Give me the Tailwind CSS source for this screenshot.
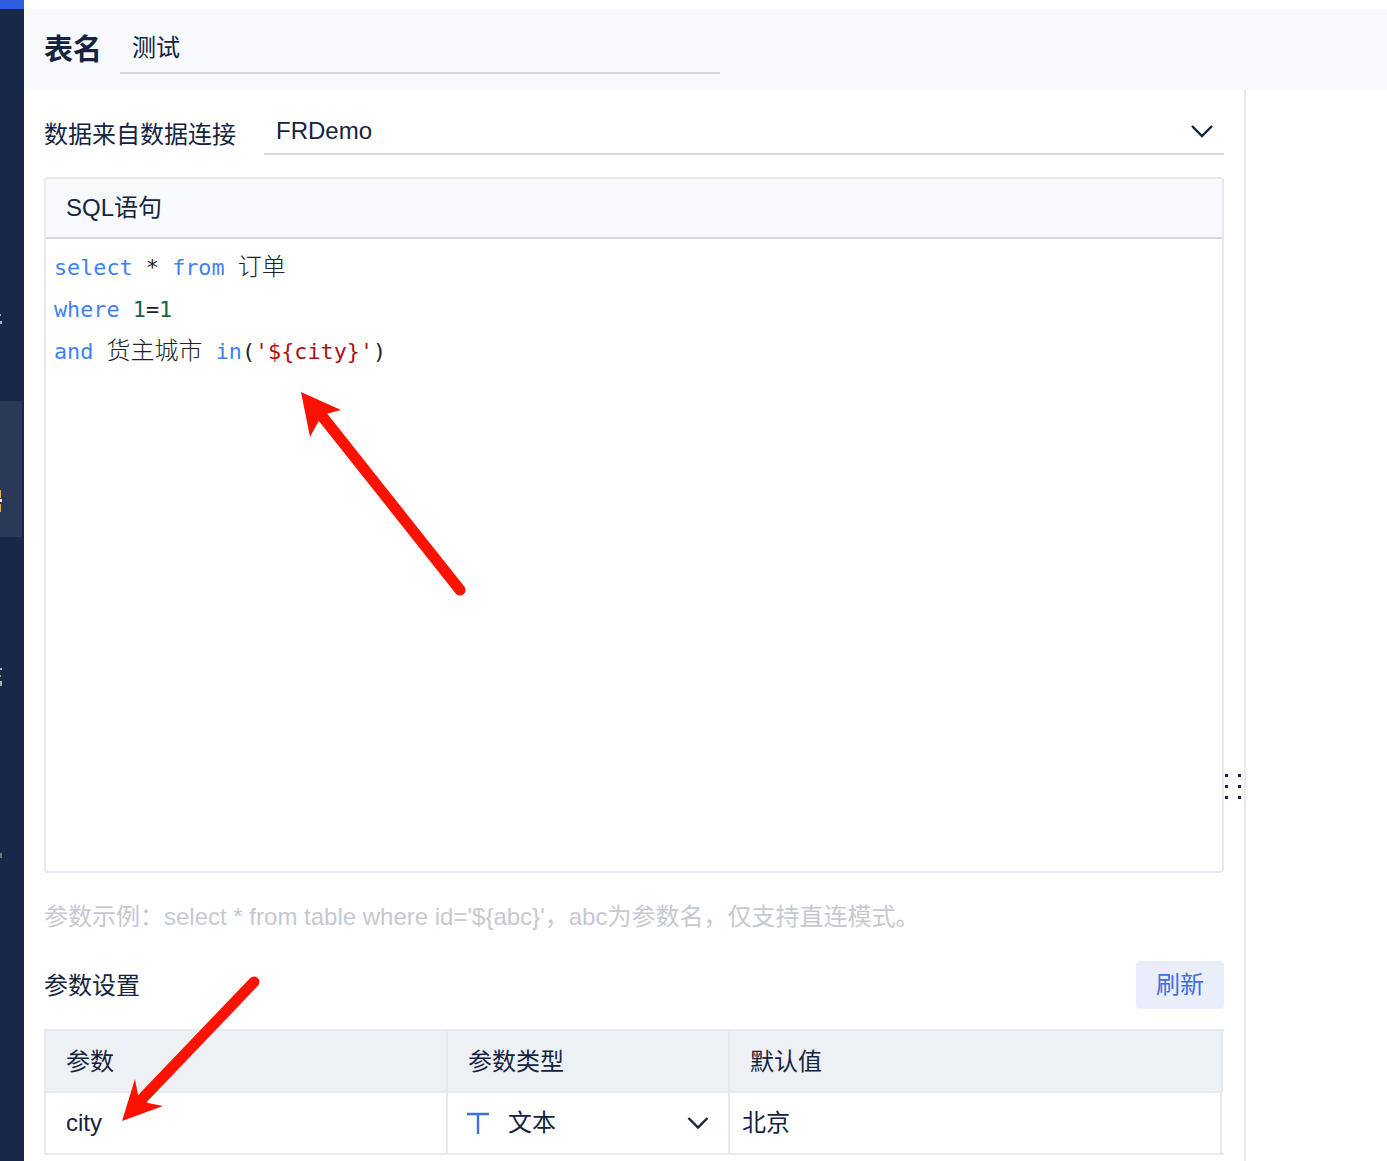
<!DOCTYPE html>
<html lang="zh-CN">
<head>
    <meta charset="UTF-8">
    <title>表名</title>
    <script src="https://cdn.jsdelivr.net/npm/@tailwindcss/browser@4"></script>
</head>
<body class="relative h-[1161px] w-[1387px] overflow-hidden bg-white font-['Liberation_Sans','Noto_Sans_CJK_SC',sans-serif] text-[24px] text-[#14233f]">
    <div class="flex h-full">
        <!-- cropped sidebar -->
        <aside class="relative h-full w-[24px] shrink-0 bg-[#172849]">
            <div class="h-[9px] bg-[#2f5fe0]"></div>
            <div class="absolute left-0 top-[401px] h-[136px] w-[22px] bg-[#2a3957]"></div>
            <div class="absolute left-0 top-[314px] h-[2px] w-[1px] bg-[#b9a58f]"></div>
            <div class="absolute left-0 top-[321px] h-[3px] w-[2px] bg-[#a9afbb]"></div>
            <div class="absolute left-0 top-[490px] h-[8px] w-[1px] bg-[#e8b040]"></div>
            <div class="absolute left-0 top-[499px] h-[3px] w-[2px] bg-[#e8e8e8]"></div>
            <div class="absolute left-0 top-[504px] h-[8px] w-[1px] bg-[#e8b040]"></div>
            <div class="absolute left-0 top-[668px] h-[2px] w-[2px] bg-[#a9afbb]"></div>
            <div class="absolute left-0 top-[675px] h-[2px] w-[1px] bg-[#b9a58f]"></div>
            <div class="absolute left-0 top-[681px] h-[5px] w-[2px] bg-[#a9afbb]"></div>
            <div class="absolute left-0 top-[853px] h-[5px] w-[2px] bg-[#6f7485]"></div>
        </aside>

        <main class="flex min-w-0 flex-1 flex-col">
            <header class="mt-[9px] flex h-[80px] shrink-0 items-center bg-[#f7f9fc] pl-[20px]">
                <span class="w-[76px] pt-[2px] text-[29px] font-bold leading-none">表名</span>
                <div class="mt-[1px] flex h-[48px] w-[600px] items-center border-b-2 border-[#d4d8e0] pl-[12px] pb-[2px]">测试</div>
            </header>

            <div class="flex min-h-0 w-[1222px] flex-1 flex-col border-r-2 border-[#e6e9f0] px-[20px]">
                <div class="mt-[18px] flex h-[48px] items-center">
                    <label class="w-[220px] pt-[8px]">数据来自数据连接</label>
                    <div class="flex h-full flex-1 items-center justify-between border-b-2 border-[#d4d8e0] pl-[12px] pr-[10px] pt-[2px]">
                        <span>FRDemo</span>
                        <svg width="24" height="16" viewBox="0 0 24 16" fill="none" stroke="#14233f" stroke-width="2.4"><path d="M2 3l10 10L22 3"/></svg>
                    </div>
                </div>

                <section class="mt-[22px] flex h-[696px] flex-col rounded-[4px] border-2 border-[#e6e9f0]">
                    <div class="flex h-[60px] shrink-0 items-center border-b-2 border-[#d4d8e0] bg-[#f7f9fc] pl-[20px]">SQL语句</div>
                    <pre class="pl-[8px] pt-[8px] font-['DejaVu_Sans_Mono','Noto_Sans_CJK_SC',monospace] text-[21.8px] leading-[42px] text-[#222]"><span class="text-[#3f82ef]">select</span> * <span class="text-[#3f82ef]">from</span> <span class="text-[24px] font-light leading-none">订单</span>
<span class="text-[#3f82ef]">where</span> <span class="text-[#116644]">1</span>=<span class="text-[#116644]">1</span>
<span class="text-[#3f82ef]">and</span> <span class="text-[24px] font-light leading-none">货主城市</span> <span class="text-[#3f82ef]">in</span>(<span class="text-[#aa1111]">'${city}'</span>)</pre>
                </section>

                <p class="mt-[26px] h-[36px] leading-[36px] text-[#c5c9d2]">参数示例：select * from table where id='${abc}'，abc为参数名，仅支持直连模式。</p>

                <div class="mt-[26px] flex h-[48px] items-center justify-between">
                    <span class="pt-[2px]">参数设置</span>
                    <button class="h-[48px] w-[88px] rounded-[4px] bg-[#e9eefa] text-[#3d6fe0]">刷新</button>
                </div>

                <div class="mt-[20px] grid h-[126px] w-[1180px] grid-cols-[402px_282px_1fr] grid-rows-[62px_62px] border-y-2 border-l-2 border-[#e6e9f0] pr-[1px]">
                    <div class="flex items-center border-b-2 border-r-2 border-[#e6e9f0] bg-[#edf0f5] pl-[20px] pt-[2px]">参数</div>
                    <div class="flex items-center border-b-2 border-r-2 border-[#e6e9f0] bg-[#edf0f5] pl-[20px] pt-[2px]">参数类型</div>
                    <div class="flex items-center border-b-2 border-r-2 border-[#e6e9f0] bg-[#edf0f5] pl-[20px] pt-[2px]">默认值</div>
                    <div class="flex items-center border-r-2 border-[#e6e9f0] pb-[2px] pl-[20px]">city</div>
                    <div class="flex items-center border-r-2 border-[#e6e9f0] pb-[2px] pl-[19px] pr-[19px]">
                        <svg width="22" height="22" viewBox="0 0 22 22" fill="none" stroke="#3d6fe0" stroke-width="2.4" class="mr-[19px] shrink-0"><path d="M0 2h22M11 2v20"/></svg>
                        <span class="flex-1">文本</span>
                        <svg width="22" height="14" viewBox="0 0 22 14" fill="none" stroke="#14233f" stroke-width="2.4"><path d="M1.500 2l9.500 9.500L20.500 2"/></svg>
                    </div>
                    <div class="mr-[1px] flex items-center border-r-2 border-[#e6e9f0] pb-[2px] pl-[12px]">北京</div>
                </div>
            </div>
        </main>
    </div>

    <!-- drag handle -->
    <div class="absolute left-[1225px] top-[774px] grid grid-cols-[3px_3px] gap-x-[10px] gap-y-[8px]">
        <i class="size-[3px] bg-[#141c5c]"></i><i class="size-[3px] bg-[#141c5c]"></i>
        <i class="size-[3px] bg-[#141c5c]"></i><i class="size-[3px] bg-[#141c5c]"></i>
        <i class="size-[3px] bg-[#141c5c]"></i><i class="size-[3px] bg-[#141c5c]"></i>
    </div>

    <!-- annotation arrows -->
    <svg class="pointer-events-none absolute left-0 top-0" width="1387" height="1161" viewBox="0 0 1387 1161">
        <path d="M460 590L322 416" stroke="#fd1202" stroke-width="11" stroke-linecap="round" fill="none"/>
        <path d="M301 392L341 410L322 415L310 437Z" fill="#fd1202"/>
        <path d="M254 982L142 1099" stroke="#fd1202" stroke-width="11" stroke-linecap="round" fill="none"/>
        <path d="M122 1121L135 1079L138 1095L148 1103L163 1106Z" fill="#fd1202"/>
    </svg>
</body>
</html>
